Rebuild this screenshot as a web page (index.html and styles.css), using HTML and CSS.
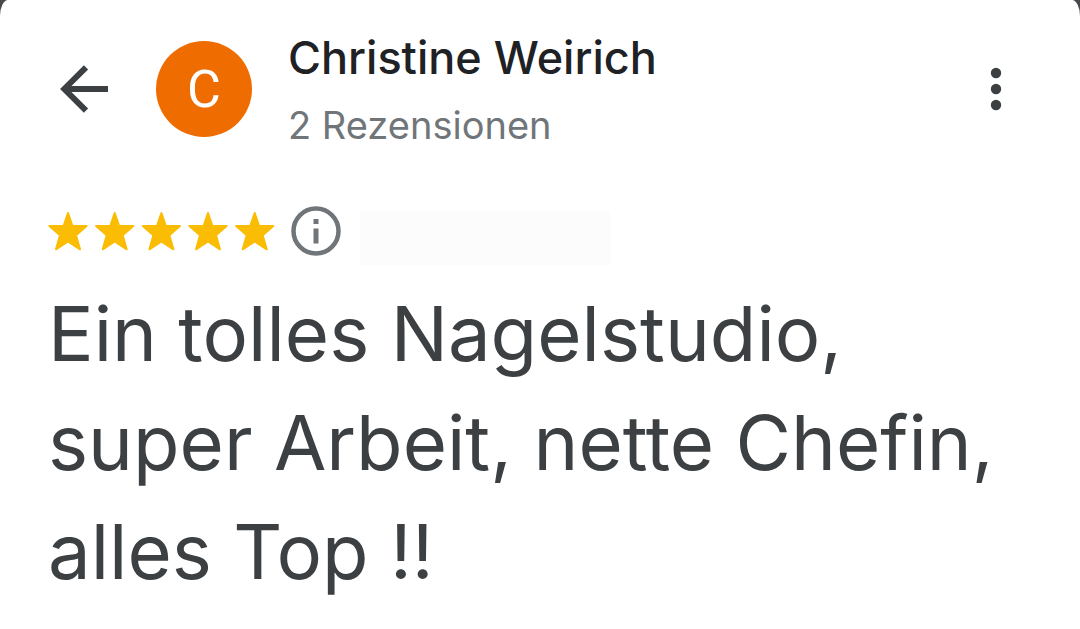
FILE: index.html
```html
<!DOCTYPE html>
<html lang="de">
<head>
<meta charset="utf-8">
<meta name="viewport" content="width=device-width, initial-scale=1">
<title>Rezension</title>
<link rel="stylesheet" href="styles.css">
</head>
<body>
<main class="sheet">
  <header class="header">
    <button class="icon-button back" type="button" aria-label="Zurück">
      <svg width="48" height="48" viewBox="0 0 48 48" fill="none" stroke="currentColor" stroke-width="6"><path d="M48 24H5M26 2.300L4.300 24 26 45.700"/></svg>
    </button>
    <div class="avatar" aria-hidden="true">C</div>
    <div class="author">
      <h1 class="name">Christine Weirich</h1>
      <p class="count">2 Rezensionen</p>
    </div>
    <button class="icon-button more" type="button" aria-label="Mehr">
      <svg width="12" height="44" viewBox="0 0 12 44" fill="currentColor"><circle cx="6" cy="6" r="5.200"/><circle cx="6" cy="22" r="5.200"/><circle cx="6" cy="38" r="5.200"/></svg>
    </button>
  </header>
  <div class="rating">
    <svg class="stars" width="228" height="42" viewBox="0 0 228 42" fill="currentColor" stroke="currentColor" stroke-width="2" stroke-linejoin="round" role="img" aria-label="5 von 5 Sternen">
      <defs><path id="star" d="M20 3l4.400 12.800L38.600 16 28 25.300 32 39.300 20 31.300 8 39.300 12 25.300 1.400 16l14.200-.2z"/></defs>
      <use href="#star"/><use href="#star" x="46.700"/><use href="#star" x="93.400"/><use href="#star" x="140"/><use href="#star" x="186.700"/>
    </svg>
    <button class="icon-button info" type="button" aria-label="Info">
      <svg width="50" height="50" viewBox="0 0 50 50"><circle cx="25" cy="25" r="22.500" fill="none" stroke="currentColor" stroke-width="4.500"/><path fill="currentColor" d="M22.500 22.500h5V37.500h-5zM22.500 13h5v5h-5z"/></svg>
    </button>
    <span class="date"></span>
  </div>
  <p class="review">Ein tolles Nagelstudio, super Arbeit, nette Chefin, alles Top !!</p>
</main>
</body>
</html>
```
FILE: styles.css
```css
* { box-sizing: border-box; }
body {
  margin: 0;
  background: #48494b;
  font-family: Inter, Roboto, sans-serif;
}
.sheet {
  min-height: 100vh;
  padding: 28px 48px 16px;
  border-radius: 8px 8px 0 0 / 16px 16px 0 0;
  background: #fff;
}
.header {
  display: flex;
  align-items: center;
  padding: 0 30px 0 12px;
}
.icon-button {
  display: flex;
  padding: 0;
  border: 0;
  background: none;
  color: #3c4043;
}
.avatar {
  display: grid;
  place-items: center;
  width: 96px;
  height: 96px;
  margin: 0 36px 0 48px;
  border-radius: 50%;
  background: #ef6c00;
  color: #fff;
  font-family: Roboto, sans-serif;
  font-size: 52px;
}
.author { flex: 1; }
.name, .count { margin: 0; font-weight: 400; }
.name {
  color: #202124;
  font-size: 45px;
  font-weight: 500;
  line-height: 60px;
}
.count {
  padding-top: 12px;
  color: #70757a;
  font-size: 38px;
  line-height: 50px;
}
.rating {
  display: flex;
  align-items: flex-start;
  margin-top: 56px;
}
.stars { margin-top: 4px; color: #fbbc04; }
.info { margin-left: 15px; color: #70757a; }
.date {
  width: 250px;
  height: 54px;
  margin: 5px 0 0 19px;
  background: #fcfcfc;
}
.review {
  margin: 14px 0 0;
  color: #3c4043;
  font-size: 76px;
  line-height: 109px;
}
```
